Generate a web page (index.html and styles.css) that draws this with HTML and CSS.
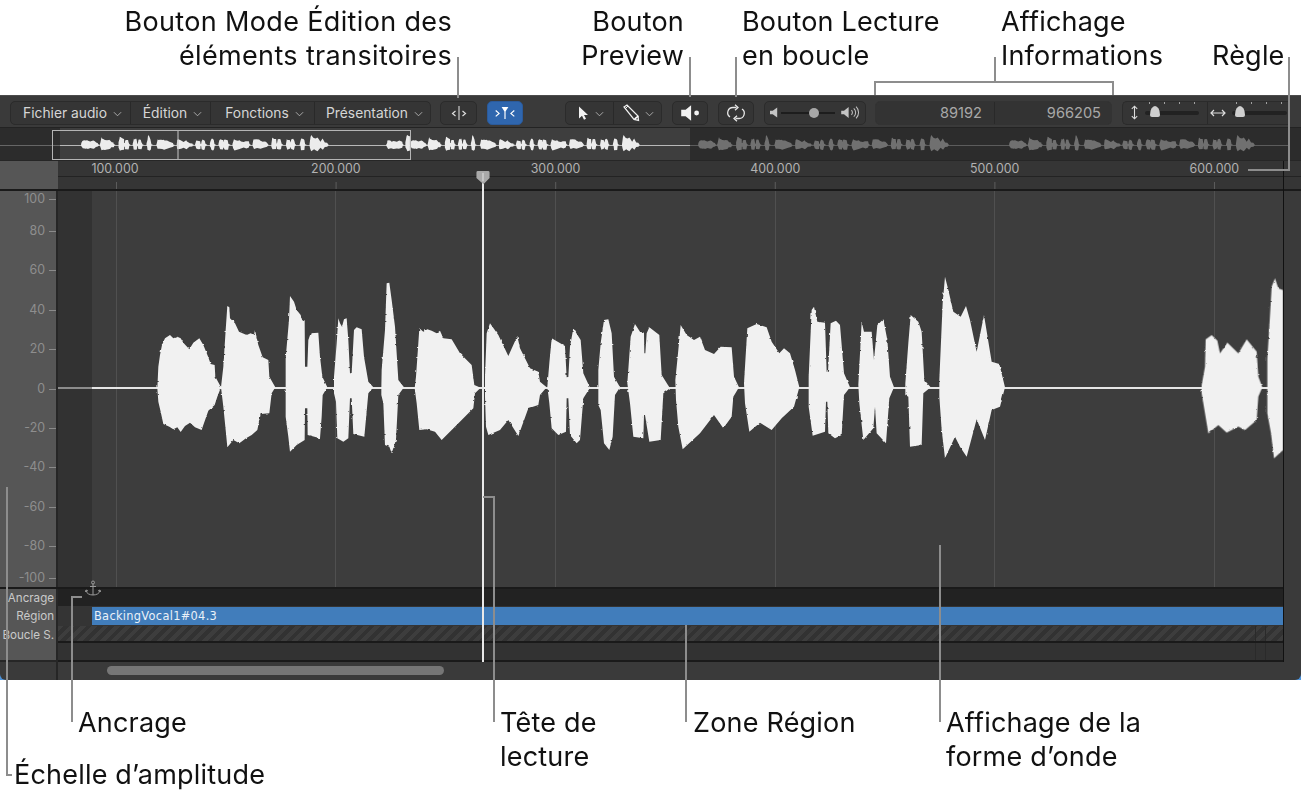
FILE: index.html
```html
<!DOCTYPE html>
<html lang="fr">
<head>
<meta charset="utf-8">
<title>Éditeur audio</title>
<link rel="stylesheet" href="styles.css">
</head>
<body>
<svg class="sprite" aria-hidden="true"><defs>
  <filter id="rough" x="-5%" y="-5%" width="110%" height="110%" color-interpolation-filters="sRGB">
    <feTurbulence type="fractalNoise" baseFrequency=".22 .3" numOctaves="1" seed="4"/>
    <feDisplacementMap in="SourceGraphic" scale="2.500" xChannelSelector="R" yChannelSelector="G"/>
  </filter>
  <symbol id="chev" viewBox="0 0 10 6"><path d="M1 1l4 4 4-4" fill="none" stroke="#b4b4b4" stroke-width="1"/></symbol>
  <g id="speech">
    <g transform="translate(140 270) scale(.33333)">
      <path d="M52 355L55 290 60 255 66 225 75 205 90 195 100 205 112 200 122 205 130 218 148 238 160 218 178 205 190 225 205 262 212 282 224 285 226 320 243 352 232 380 224 405 205 422 190 465 185 480 165 472 150 458 135 468 122 486 112 472 100 478 88 470 70 462 62 425 55 395Z"/>
      <path d="M243 352L250 290 257 180 262 108 268 112 270 145 285 160 297 185 320 195 332 190 342 195 345 180 355 225 368 262 385 270 388 320 406 352 395 370 388 430 362 432 352 480 335 495 318 505 298 520 280 510 262 532 258 490 250 410Z"/>
      <path d="M437 355L437 265 447 150 450 78 462 95 470 120 482 135 488 155 494 150 495 290 502 290 505 210 512 190 535 188 540 260 547 320 562 352 548 375 545 440 540 505 515 498 503 495 502 415 495 415 494 510 470 525 450 545 445 500 437 440Z"/>
      <path d="M582 320L590 220 595 145 600 160 606 170 612 148 620 145 625 210 630 310 635 310 642 180 650 172 665 178 672 260 685 335 700 352 685 370 673 500 640 492 635 385 630 385 625 505 610 515 592 505 588 395 582 370Z"/>
      <path d="M724 355L725 300 735 180 740 40 748 38 755 90 765 170 775 330 792 352 775 375 768 510 755 550 748 530 735 525 730 400 724 375Z"/>
      <path d="M824 355L828 320 835 220 838 175 850 185 862 178 875 182 890 190 900 182 910 205 935 208 960 250 995 285 1003 345 1022 353 1005 370 1000 415 965 450 935 480 905 510 885 485 860 478 838 480 830 400Z"/>
      <path d="M1035 320L1040 190 1050 160 1075 195 1105 258 1132 198 1140 235 1170 295 1195 305 1200 335 1220 352 1200 375 1195 405 1165 415 1135 498 1105 450 1080 480 1045 495 1038 470 1035 380Z"/>
      <path d="M1222 350L1228 280 1235 205 1275 228 1280 322 1285 322 1290 230 1300 175 1322 210 1330 310 1350 353 1330 385 1320 510 1310 520 1290 495 1285 385 1280 385 1278 485 1255 495 1235 475 1228 400Z"/>
    </g>
    <g transform="translate(590 270) scale(.33333)">
      <path d="M25 300L32 220 42 150 55 148 65 190 72 320 90 352 75 375 68 500 58 540 42 520 32 420 25 405Z"/>
      <path d="M112 340L122 200 135 162 150 185 162 188 163 250 166 250 170 190 178 172 208 195 215 315 240 355 220 370 212 510 178 515 165 435 162 435 160 505 130 500 120 400Z"/>
      <path d="M256 330L265 240 272 165 290 195 312 210 330 200 345 240 372 252 392 230 425 232 432 320 447 352 430 380 425 440 400 475 372 435 330 490 278 538 265 470 258 390Z"/>
      <path d="M462 340L472 175 500 162 530 172 545 215 568 250 582 235 600 250 615 300 628 352 612 410 575 445 545 480 510 458 478 485 465 400Z"/>
      <path d="M656 320L665 120 672 110 682 155 705 158 710 305 714 305 722 160 738 152 750 165 762 310 780 352 762 375 755 495 735 505 715 490 712 395 708 395 705 485 668 497 656 410Z"/>
      <path d="M805 345L815 155 822 185 845 185 852 270 862 165 880 148 892 210 900 320 912 352 898 385 888 520 860 490 855 410 850 475 820 510 808 400Z"/>
      <path d="M946 340L955 220 962 135 985 155 995 185 1003 330 1022 352 1000 370 995 525 960 530 955 380 946 375Z"/>
      <path d="M1048 330L1058 100 1065 20 1075 60 1090 125 1112 140 1128 108 1140 150 1160 245 1182 135 1205 275 1228 282 1245 352 1230 410 1205 420 1185 510 1160 448 1130 560 1110 530 1095 500 1065 565 1055 480 1048 380Z"/>
    </g>
  </g>
  <g id="tail" transform="translate(1160 270) scale(.33333)">
    <path d="M125 345L135 290 137 208 155 195 172 212 180 250 202 218 235 250 260 208 290 245 295 320 307 352 295 380 290 450 255 480 235 470 200 488 175 465 145 490 135 430 125 370Z"/>
    <path d="M322 355L322 265 328 170 335 50 345 25 355 55 369 60 369 540 342 565 333 490 322 430Z"/>
  </g>
</defs></svg>

<div class="page">
  <div class="window">
    <div class="window-inner">
      <div class="toolbar">
        <div class="group menus">
          <div class="cell m1">Fichier audio <svg class="chev"><use href="#chev"/></svg></div>
          <div class="cell m2">Édition <svg class="chev"><use href="#chev"/></svg></div>
          <div class="cell m3">Fonctions <svg class="chev"><use href="#chev"/></svg></div>
          <div class="cell m4">Présentation <svg class="chev"><use href="#chev"/></svg></div>
        </div>
        <div class="group btn btn-first">
          <svg class="ico" viewBox="0 0 22 18"><path d="M7.500 7l-3 2.500 3 2.500M14.500 7l3 2.500-3 2.500" fill="none" stroke="#ddd" stroke-width="1.200"/><path d="M11 2v14" stroke="#ccc" stroke-width="1.200"/></svg>
        </div>
        <div class="group btn blue">
          <svg class="ico" viewBox="0 0 26 18"><path d="M2 6l4 3.500-4 3.500M24 6l-4 3.500 4 3.500" fill="none" stroke="#fff" stroke-width="1.400"/><path d="M9 2h8l-3.200 5H12.200z" fill="#fff"/><path d="M13 5v11" stroke="#fff" stroke-width="1.400"/></svg>
        </div>
        <div class="group tools">
          <div class="cell t1">
            <svg class="ico" viewBox="0 0 14 16"><path d="M3 1.500v12l3-2.800 2 4 2-1-2-3.800h4z" fill="#f2f2f2"/></svg>
            <svg class="chev"><use href="#chev"/></svg>
          </div>
          <div class="cell t2">
            <svg class="ico" viewBox="0 0 18 18"><path d="M2 3l3-2 11 11 .5 4.500-4.500-1z" fill="none" stroke="#eee" stroke-width="1.300"/><path d="M3 5l3-3" stroke="#eee"/><path d="M12.500 15.200l3.700-3z" fill="#fff" stroke="#fff" stroke-width="1.500"/></svg>
            <svg class="chev"><use href="#chev"/></svg>
          </div>
        </div>
        <div class="group btn">
          <svg class="ico" viewBox="0 0 20 16"><path d="M2 5h4l5-4v14l-5-4H2z" fill="#f2f2f2"/><circle cx="16" cy="8" r="2.200" fill="#f2f2f2"/></svg>
        </div>
        <div class="group btn">
          <svg class="ico" viewBox="0 0 20 18"><path d="M10.500 3.500H7a5.200 5.200 0 0 0-3 9.500M9.500 14.500H13a5.200 5.200 0 0 0 3-9.500" fill="none" stroke="#e6e6e6" stroke-width="1.300"/><path d="M9 .8l3 2.700-3 2.700M11 11.800l-3 2.700 3 2.700" fill="none" stroke="#e6e6e6" stroke-width="1.300"/></svg>
        </div>
        <div class="group volume">
          <svg class="ico" viewBox="0 0 10 12"><path d="M0 4h3l5-3.500v11L3 8H0z" fill="#c4c4c4"/></svg>
          <div class="track vol-track"><span class="vol-knob"></span></div>
          <svg class="ico" viewBox="0 0 20 14"><path d="M0 5h3l5-4v12L3 9H0z" fill="#c4c4c4"/><path d="M11 4.500a3.500 3.500 0 0 1 0 5M13.500 2.500a6 6 0 0 1 0 9M16 .8a8.500 8.500 0 0 1 0 12.400" fill="none" stroke="#c4c4c4" stroke-width="1.100"/></svg>
        </div>
        <div class="group info">
          <div class="field f1">89192</div>
          <div class="field f2">966205</div>
        </div>
        <div class="group zooms">
          <div class="cell z1">
            <svg class="ico" viewBox="0 0 10 16"><path d="M5 1v14M2 4l3-3 3 3M2 12l3 3 3-3" fill="none" stroke="#ddd" stroke-width="1.200"/></svg>
            <div class="zoom-slider"><span class="marks"></span><span class="zoom-knob"></span></div>
          </div>
          <div class="cell z2">
            <svg class="ico" viewBox="0 0 16 10"><path d="M1 5h14M4 2L1 5l3 3M12 2l3 3-3 3" fill="none" stroke="#ddd" stroke-width="1.200"/></svg>
            <div class="zoom-slider"><span class="marks"></span><span class="zoom-knob"></span></div>
          </div>
        </div>
      </div>

      <svg class="overview" viewBox="0 128 1301 32">
        <rect x="60" y="128" width="630" height="32" fill="#3e3e3e"/>
        <path d="M0 145.500H60" stroke="#666"/>
        <path d="M60 145.500H690" stroke="#b8b8b8"/>
        <path d="M690 145.500H1290" stroke="#5c5c5c"/>
        <g class="ov-bright">
          <g transform="translate(35.050 110.050) scale(.2922 .09)"><use href="#speech"/><use href="#tail"/></g>
          <g transform="translate(367.450 110.050) scale(.271 .09)"><use href="#speech"/></g>
        </g>
        <g class="ov-dim">
          <g transform="translate(651.530 110.050) scale(.296 .09)"><use href="#speech"/></g>
          <g transform="translate(963.470 110.050) scale(.29 .09)"><use href="#speech"/></g>
        </g>
        <path d="M178 131V160" stroke="#c8c8c8"/>
        <rect x="52.500" y="130.500" width="358" height="29" fill="none" stroke="#b4b4b4"/>
      </svg>

      <div class="ruler">
        <div class="ruler-side"></div>
        <div class="ruler-main">
          <div class="ruler-nums">
            <span>100.000</span><span>200.000</span><span>300.000</span><span>400.000</span><span>500.000</span><span>600.000</span>
          </div>
          <div class="ruler-ticks"></div>
        </div>
      </div>

      <div class="main">
        <div class="axis">
          <div class="tick">100</div><div class="tick first">80</div><div class="tick">60</div><div class="tick">40</div><div class="tick">20</div><div class="tick">0</div><div class="tick">-20</div><div class="tick">-40</div><div class="tick">-60</div><div class="tick">-80</div><div class="tick first">-100</div>
        </div>
        <div class="plot">
          <svg class="plot-svg" viewBox="58 191 1225 396">
            <path d="M116.500 191V587M335.500 191V587M555.500 191V587M775.500 191V587M994.500 191V587M1214.500 191V587" stroke="#505050"/>
            <rect x="58" y="387" width="34" height="2" fill="#8c8c8c"/>
            <rect x="92" y="387" width="1190" height="2" fill="#e6e6e6"/>
            <g class="main-wave" filter="url(#rough)"><use href="#speech"/><use href="#tail"/></g>
          </svg>
        </div>
      </div>

      <div class="lanes">
        <div class="lane lane-anchor"><div class="lane-name">Ancrage</div><div class="lane-body">
          <svg class="anchor" viewBox="0 0 16 18"><circle cx="8" cy="2.500" r="1.500" fill="none" stroke="#9a9a9a"/><path d="M8 4v11M5 6.500h6M1 10.500c.5 3 3.500 4.500 7 4.500s6.500-1.500 7-4.500M.5 12l.5-2 2 1M15.500 12l-.5-2-2 1" fill="none" stroke="#9a9a9a"/></svg>
        </div></div>
        <div class="lane lane-region"><div class="lane-name">Région</div><div class="lane-body"><div class="region">BackingVocal1#04.3</div></div></div>
        <div class="lane lane-loop"><div class="lane-name">Boucle S.</div><div class="lane-body"></div></div>
        <div class="lane lane-empty"><div class="lane-name"></div><div class="lane-body"></div></div>
      </div>

      <div class="scrollrow">
        <div class="scroll-side"></div>
        <div class="scroll-main"><div class="thumb"></div></div>
      </div>

      <div class="playhead">
        <svg class="pin" viewBox="0 0 14 16"><path d="M0 1.500a1.500 1.500 0 0 1 1.500-1.500h11a1.500 1.500 0 0 1 1.500 1.500v6L7.500 14 0 7.500z" fill="#a9a9a9"/><path d="M7 2v9" stroke="#e6e6e6"/></svg>
      </div>
    </div>
  </div>

  <svg class="leaders" viewBox="0 0 1301 795">
    <path d="M458 57V98M690 57V97M736 57V97M995 57V82M875 95V82H1113V95M1289 57V170H1248M483 497H494V722M686 625V722M940 545V722M82 597H72V722M7 487V775H12"/>
  </svg>

  <div class="label l-mode">Bouton Mode Édition des<br>éléments transitoires</div>
  <div class="label l-prev">Bouton<br>Preview</div>
  <div class="label l-loop">Bouton Lecture<br>en boucle</div>
  <div class="label l-info">Affichage<br>Informations</div>
  <div class="label l-rule">Règle</div>
  <div class="label l-anc">Ancrage</div>
  <div class="label l-head">Tête de<br>lecture</div>
  <div class="label l-zone">Zone Région</div>
  <div class="label l-wave">Affichage de la<br>forme d’onde</div>
  <div class="label l-amp">Échelle d’amplitude</div>
</div>
</body>
</html>
```

FILE: styles.css
```css
* { box-sizing: border-box; }
html, body { margin: 0; padding: 0; background: #fff; }
body { font-family: "Inter", "Liberation Sans", sans-serif; overflow: hidden; }
.sprite { position: absolute; width: 0; height: 0; }
.page { position: relative; width: 1301px; height: 795px; padding-top: 95px; overflow: hidden; }

.window { height: 585px; background: #4d94dc; }
.window-inner { position: relative; height: 585px; background: #3a3a3a; border-top: 1px solid #4c4c4c; border-radius: 0 0 6px 6px; overflow: hidden; }

/* toolbar */
.toolbar { display: flex; align-items: center; height: 32px; padding: 2px 0 0 10px; border-bottom: 1px solid #232323; font-size: 13.8px; color: #d6d6d6; }
.group { display: flex; align-items: center; height: 24px; background: #353535; border: 1px solid #2b2b2b; border-radius: 5px; flex: none; }
.cell { display: flex; align-items: center; justify-content: center; gap: 6px; height: 100%; border-right: 1px solid #292929; white-space: nowrap; }
.cell:last-child { border-right: 0; }
.chev { width: 9px; height: 6px; margin-top: 2px; flex: none; }
.menus { width: 421px; }
.menus .cell { padding-left: 4px; }
.m1 { width: 120px; }
.m2 { width: 80px; }
.m3 { width: 104px; }
.m4 { flex: 1; }
.btn { width: 36px; justify-content: center; margin-left: 10px; }
.btn .ico { width: 22px; height: 18px; }
.btn-first { width: 37px; margin-left: 9px; }
.blue { background: #2f66ae; border-color: #2b5a9a; }
.tools { width: 97px; margin-left: 42px; }
.t1, .t2 { flex: 1; gap: 5px; }
.t1 .ico { width: 14px; height: 16px; }
.t2 .ico { width: 18px; height: 18px; }
.volume { width: 102px; margin-left: 10px; padding: 0 5px; justify-content: space-between; }
.volume .ico:first-child { width: 9px; height: 11px; }
.volume .ico:last-child { width: 19px; height: 13px; }
.vol-track { position: relative; width: 54px; height: 2px; margin-right: 4px; background: #1d1d1d; }
.vol-knob { position: absolute; left: 28px; top: -4px; width: 10px; height: 10px; border-radius: 50%; background: #a8a8a8; }
.info { width: 237px; margin-left: 9px; background: #333; border-color: #333; color: #a8a8a8; font-size: 14.6px; }
.field { height: 100%; display: flex; align-items: center; justify-content: flex-end; }
.f1 { width: 119px; padding-right: 12px; border-right: 1px solid #292929; }
.f2 { flex: 1; padding-right: 10px; }
.zooms { width: 168px; margin-left: 10px; border-right: 0; border-radius: 5px 0 0 5px; }
.z1 { width: 85px; justify-content: flex-start; padding-left: 7px; gap: 6px; }
.z2 { flex: 1; justify-content: flex-start; padding-left: 2px; gap: 6px; }
.z1 .ico { width: 9px; height: 15px; flex: none; }
.z2 .ico { width: 16px; height: 10px; flex: none; }
.zoom-slider { position: relative; flex: 1; height: 4px; margin-right: 8px; background: #222; border-radius: 2px; }
.z2 .zoom-slider { margin-right: 3px; }
.marks { position: absolute; left: 4px; right: 2px; top: -9px; height: 2px; background: repeating-linear-gradient(90deg, #a0a0a0 0 1px, transparent 1px 15px); }
.zoom-knob { position: absolute; left: 5px; top: -5px; width: 10px; height: 11px; background: #cfcfcf; border-radius: 50% 50% 2px 2px / 80% 80% 2px 2px; }
.z2 .zoom-knob { left: 3px; }

/* overview */
.overview { display: block; width: 1301px; height: 32px; background: #2c2c2c; }
.ov-bright { fill: #ececec; }
.ov-dim { fill: #707070; }

/* ruler */
.ruler { display: flex; height: 31px; border-top: 1px solid #262626; border-bottom: 2px solid #1a1a1a; }
.ruler-side { width: 58px; background: #565656; flex: none; }
.ruler-main { flex: 1; display: flex; flex-direction: column; background: #353535; }
.ruler-nums { display: flex; height: 16px; padding-left: 33.5px; align-items: center; border-bottom: 1px solid #232323; color: #b2b2b2; font-size: 12.4px; }
.ruler-nums span { width: 219.6px; flex: none; }
.ruler-ticks { flex: 1; background: linear-gradient(90deg, #5c5c5c 1px, transparent 1px) 58px 100% / 219.6px 7px repeat-x; }

/* main */
.main { display: flex; height: 396px; padding-right: 18px; }
.axis { width: 58px; flex: none; background: #565656; border-right: 2px solid #262626; }
.tick { position: relative; height: 16px; margin-top: 23.4px; padding-right: 11px; line-height: 16px; text-align: right; font-size: 12.4px; color: #8e8e8e; }
.tick::after { content: ""; position: absolute; right: 0; top: 8px; width: 7px; height: 1px; background: #8a8a8a; }
.tick:first-child { margin-top: 0; }
.tick.first { margin-top: 16px; }
.plot { flex: 1; background: linear-gradient(90deg, #323232 34px, #3d3d3d 34px); }
.plot-svg { display: block; width: 1225px; height: 396px; }
.main-wave { fill: #f1f1f1; }

/* lanes */
.lanes { border-top: 2px solid #1a1a1a; margin-right: 18px; }
.lane { display: flex; font-size: 11.6px; color: #c9c9c9; }
.lane-name { width: 58px; flex: none; background: #565656; border-right: 2px solid #262626; padding-right: 2px; white-space: nowrap; display: flex; align-items: center; justify-content: flex-end; }
.lane-body { position: relative; flex: 1; }
.lane-anchor { height: 17px; }
.lane-anchor .lane-body { background: #222; }
.anchor { position: absolute; left: 27px; top: -9px; width: 16px; height: 18px; }
.lane-region { height: 20px; }
.lane-region .lane-body { background: #343434; padding: 1px 0 1px 34px; }
.region { height: 18px; background: #417dbb; color: #eaf1f8; font-family: "DejaVu Sans", sans-serif; font-size: 11.4px; line-height: 18px; padding-left: 2px; letter-spacing: .3px; }
.lane-loop { height: 17px; }
.lane-loop .lane-body { background: linear-gradient(90deg, transparent 1197px, #2a2a2a 1197px 1198px, transparent 1198px 1207px, #2a2a2a 1207px 1208px, transparent 1208px), repeating-linear-gradient(135deg, #3d3d3d 0 4px, #323232 4px 8px); border-bottom: 2px solid #1a1a1a; }
.lane-empty { height: 19px; }
.lane-empty .lane-body { background: linear-gradient(90deg, #323232 1197px, #2a2a2a 1197px 1198px, #323232 1198px 1207px, #2a2a2a 1207px 1208px, #323232 1208px); border-bottom: 2px solid #1a1a1a; }
.lane-empty .lane-name { border-bottom: 2px solid #262626; }

/* scroll */
.scrollrow { display: flex; height: 18px; }
.scroll-side { width: 58px; flex: none; border-right: 2px solid #262626; }
.scroll-main { flex: 1; padding: 4px 0 0 49px; }
.thumb { width: 337px; height: 9px; border-radius: 5px; background: #767676; }

/* playhead + right border */
.window-inner::after { content: ""; position: absolute; left: 1283px; top: 65px; width: 1px; height: 501px; background: #111; }
.playhead { position: absolute; left: 482px; top: 75px; width: 2px; height: 491px; background: #e9e9e9; }
.pin { position: absolute; left: -6px; top: 0; width: 14px; height: 15px; }

/* callouts */
.leaders { position: absolute; left: 0; top: 0; width: 1301px; height: 795px; fill: none; stroke: #8d8d8d; stroke-width: 2; pointer-events: none; }
.label { position: absolute; font-size: 27px; letter-spacing: .2px; line-height: 34px; color: #111; white-space: nowrap; }
.l-mode { right: 849px; top: 5px; text-align: right; letter-spacing: .35px; }
.l-prev { right: 617px; top: 5px; text-align: right; }
.l-loop { left: 742px; top: 5px; }
.l-info { left: 1001px; top: 5px; }
.l-rule { left: 1212px; top: 39px; }
.l-anc { left: 78px; top: 706px; }
.l-head { left: 500px; top: 706px; }
.l-zone { left: 693px; top: 706px; }
.l-wave { left: 946px; top: 706px; }
.l-amp { left: 14px; top: 758px; }
```
